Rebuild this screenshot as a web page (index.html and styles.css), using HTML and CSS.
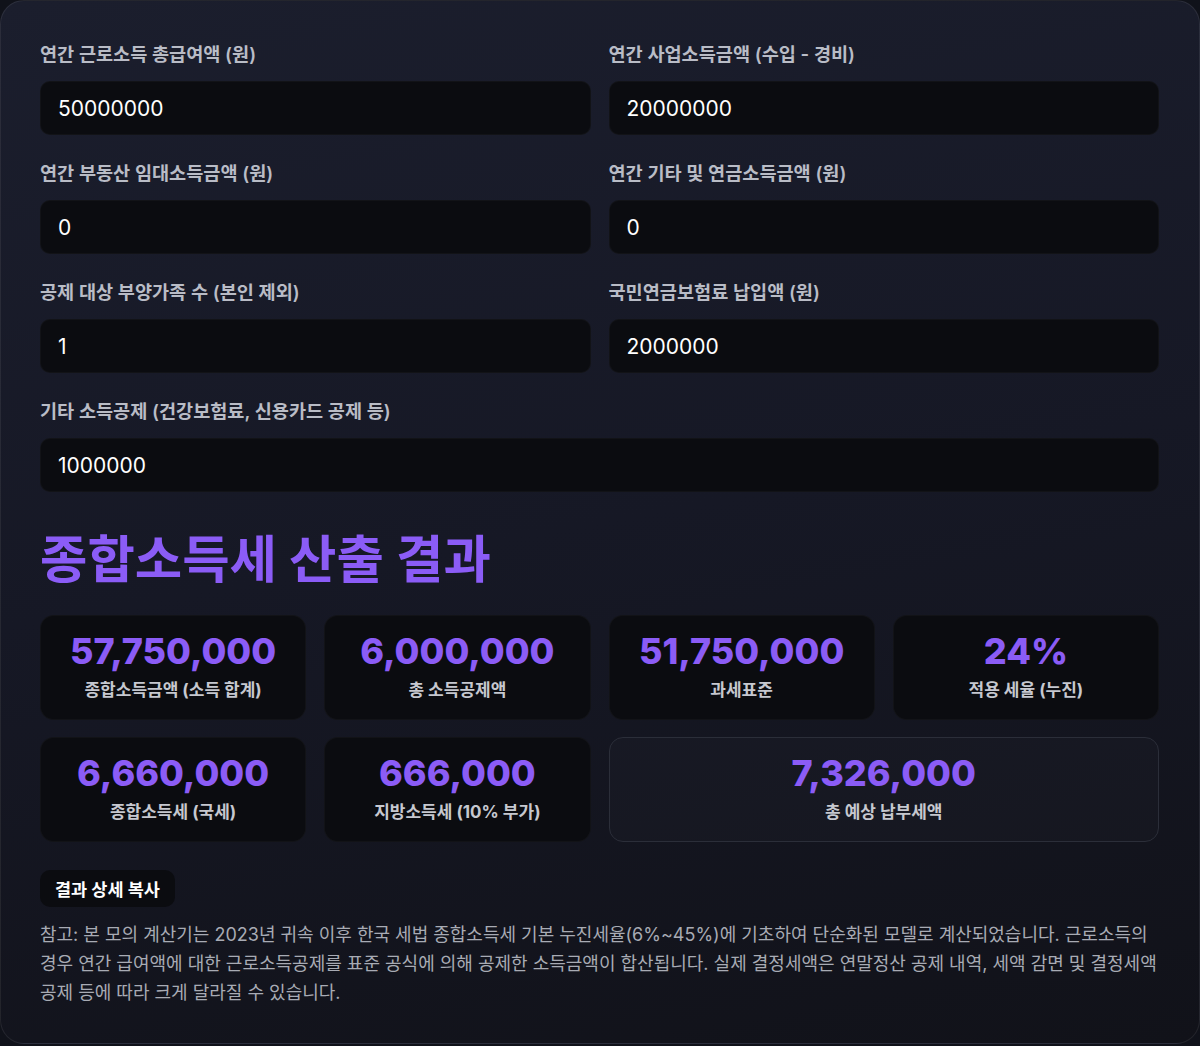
FILE: index.html
```html
<!DOCTYPE html>
<html lang="ko">
<head>
    <meta charset="UTF-8">
    <meta name="viewport" content="width=device-width, initial-scale=1.0">
    <title>종합소득세 계산기</title>
    <link rel="stylesheet" href="styles.css">
</head>
<body>
    <div class="card">
        <div class="form">
            <div class="field">
                <label for="wage">연간 근로소득 총급여액 (원)</label>
                <input id="wage" type="text" value="50000000">
            </div>
            <div class="field">
                <label for="biz">연간 사업소득금액 (수입 - 경비)</label>
                <input id="biz" type="text" value="20000000">
            </div>
            <div class="field">
                <label for="rent">연간 부동산 임대소득금액 (원)</label>
                <input id="rent" type="text" value="0">
            </div>
            <div class="field">
                <label for="etc">연간 기타 및 연금소득금액 (원)</label>
                <input id="etc" type="text" value="0">
            </div>
            <div class="field">
                <label for="family">공제 대상 부양가족 수 (본인 제외)</label>
                <input id="family" type="text" value="1">
            </div>
            <div class="field">
                <label for="pension">국민연금보험료 납입액 (원)</label>
                <input id="pension" type="text" value="2000000">
            </div>
            <div class="field wide">
                <label for="other">기타 소득공제 (건강보험료, 신용카드 공제 등)</label>
                <input id="other" type="text" value="1000000">
            </div>
        </div>

        <h2 class="result-title">종합소득세 산출 결과</h2>

        <div class="stats">
            <div class="stat">
                <div class="stat-value">57,750,000</div>
                <div class="stat-label">종합소득금액 (소득 합계)</div>
            </div>
            <div class="stat">
                <div class="stat-value">6,000,000</div>
                <div class="stat-label">총 소득공제액</div>
            </div>
            <div class="stat">
                <div class="stat-value">51,750,000</div>
                <div class="stat-label">과세표준</div>
            </div>
            <div class="stat">
                <div class="stat-value">24%</div>
                <div class="stat-label">적용 세율 (누진)</div>
            </div>
            <div class="stat">
                <div class="stat-value">6,660,000</div>
                <div class="stat-label">종합소득세 (국세)</div>
            </div>
            <div class="stat">
                <div class="stat-value">666,000</div>
                <div class="stat-label">지방소득세 (10% 부가)</div>
            </div>
            <div class="stat total">
                <div class="stat-value">7,326,000</div>
                <div class="stat-label">총 예상 납부세액</div>
            </div>
        </div>

        <button class="copy-btn">결과 상세 복사</button>

        <p class="note">참고: 본 모의 계산기는 2023년 귀속 이후 한국 세법 종합소득세 기본 누진세율(6%~45%)에 기초하여 단순화된 모델로 계산되었습니다. 근로소득의 경우 연간 급여액에 대한 근로소득공제를 표준 공식에 의해 공제한 소득금액이 합산됩니다. 실제 결정세액은 연말정산 공제 내역, 세액 감면 및 결정세액 공제 등에 따라 크게 달라질 수 있습니다.</p>
    </div>
</body>
</html>
```

FILE: styles.css
```css
* {
    box-sizing: border-box;
}

body {
    margin: 0;
    background-color: #10121a;
    font-family: Inter, "Noto Sans CJK KR", sans-serif;
    color: #e6e7eb;
}

.card {
    width: 1200px;
    padding: 40px 40px 36px 39px;
    border: 1px solid rgba(255, 255, 255, 0.08);
    border-radius: 24px;
    background: linear-gradient(170deg, #1b1e2d 0%, #161825 50%, #111219 100%);
}

.form {
    display: grid;
    grid-template-columns: 1fr 1fr;
    column-gap: 18px;
    row-gap: 25px;
}

.field {
    display: flex;
    flex-direction: column;
}

.field.wide {
    grid-column: span 2;
}

.field label {
    font-size: 18.6px;
    line-height: 27px;
    font-weight: 600;
    color: #b9bcc6;
    margin-bottom: 13px;
}

.field input {
    height: 54px;
    padding: 0 17px;
    border: 1px solid rgba(255, 255, 255, 0.03);
    border-radius: 10px;
    background-color: #0b0c10;
    color: #ffffff;
    font-family: Inter, "Noto Sans CJK KR", sans-serif;
    font-size: 21px;
    outline: none;
}

.result-title {
    margin: 37px 0 26px;
    font-size: 51.5px;
    line-height: 60px;
    font-weight: 700;
    color: #8b5cf6;
}

.stats {
    display: grid;
    grid-template-columns: repeat(4, 1fr);
    column-gap: 18px;
    row-gap: 17px;
}

.stat {
    height: 105px;
    padding: 14px 12px 0;
    border: 1px solid rgba(255, 255, 255, 0.03);
    border-radius: 14px;
    background-color: #0b0c10;
    text-align: center;
}

.stat.total {
    grid-column: span 2;
    background-color: rgba(255, 255, 255, 0.015);
    border: 1px solid #2b2e39;
}

.stat-value {
    font-size: 36px;
    line-height: 43px;
    font-weight: 800;
    color: #8b5cf6;
}

.stat-label {
    margin-top: 5px;
    font-size: 17px;
    line-height: 25px;
    font-weight: 700;
    color: #c6c8cf;
}

.copy-btn {
    display: block;
    margin-top: 28px;
    height: 37px;
    padding: 0 15px;
    border: none;
    border-radius: 10px;
    background-color: #0b0c10;
    color: #ffffff;
    font-family: Inter, "Noto Sans CJK KR", sans-serif;
    font-size: 17.5px;
    font-weight: 700;
    cursor: pointer;
}

.note {
    margin: 13px 0 0;
    font-size: 18px;
    line-height: 29px;
    color: #a8abb4;
    word-break: keep-all;
}
```
